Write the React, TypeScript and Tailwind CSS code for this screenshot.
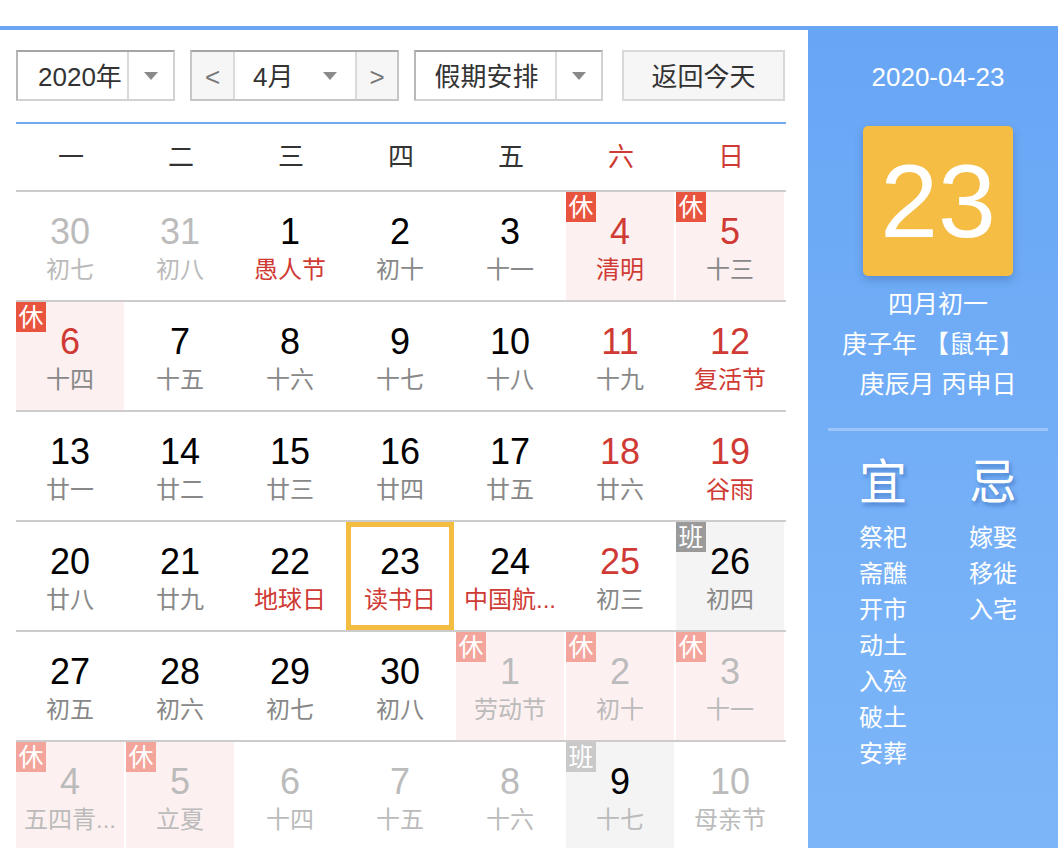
import React from "react";

type Cell = {
  n: number;
  l: string;
  other?: boolean;
  numRed?: boolean;
  lunarRed?: boolean;
  badge?: "休" | "班";
  today?: boolean;
  numBlack?: boolean;
};

const rows: Cell[][] = [
  [
    { n: 30, l: "初七", other: true },
    { n: 31, l: "初八", other: true },
    { n: 1, l: "愚人节", lunarRed: true },
    { n: 2, l: "初十" },
    { n: 3, l: "十一" },
    { n: 4, l: "清明", numRed: true, lunarRed: true, badge: "休" },
    { n: 5, l: "十三", numRed: true, badge: "休" },
  ],
  [
    { n: 6, l: "十四", numRed: true, badge: "休" },
    { n: 7, l: "十五" },
    { n: 8, l: "十六" },
    { n: 9, l: "十七" },
    { n: 10, l: "十八" },
    { n: 11, l: "十九", numRed: true },
    { n: 12, l: "复活节", numRed: true, lunarRed: true },
  ],
  [
    { n: 13, l: "廿一" },
    { n: 14, l: "廿二" },
    { n: 15, l: "廿三" },
    { n: 16, l: "廿四" },
    { n: 17, l: "廿五" },
    { n: 18, l: "廿六", numRed: true },
    { n: 19, l: "谷雨", numRed: true, lunarRed: true },
  ],
  [
    { n: 20, l: "廿八" },
    { n: 21, l: "廿九" },
    { n: 22, l: "地球日", lunarRed: true },
    { n: 23, l: "读书日", lunarRed: true, today: true },
    { n: 24, l: "中国航...", lunarRed: true },
    { n: 25, l: "初三", numRed: true },
    { n: 26, l: "初四", badge: "班" },
  ],
  [
    { n: 27, l: "初五" },
    { n: 28, l: "初六" },
    { n: 29, l: "初七" },
    { n: 30, l: "初八" },
    { n: 1, l: "劳动节", other: true, badge: "休" },
    { n: 2, l: "初十", other: true, badge: "休" },
    { n: 3, l: "十一", other: true, badge: "休" },
  ],
  [
    { n: 4, l: "五四青...", other: true, badge: "休" },
    { n: 5, l: "立夏", other: true, badge: "休" },
    { n: 6, l: "十四", other: true },
    { n: 7, l: "十五", other: true },
    { n: 8, l: "十六", other: true },
    { n: 9, l: "十七", other: true, badge: "班", numBlack: true },
    { n: 10, l: "母亲节", other: true },
  ],
];

const weekdays = ["一", "二", "三", "四", "五", "六", "日"];

function Arrow() {
  return (
    <div className="w-0 h-0 border-l-[7px] border-r-[7px] border-t-[8px] border-l-transparent border-r-transparent border-t-[#8a8a8a]" />
  );
}

function DayCell({ c }: { c: Cell }) {
  const bg =
    c.badge === "休"
      ? "bg-[#fdf0f0]"
      : c.badge === "班"
      ? "bg-[#f4f4f4]"
      : "bg-white";
  const numColor = c.numBlack
    ? "text-black"
    : c.other
    ? "text-[#bbbbbb]"
    : c.numRed
    ? "text-[#cf3a34]"
    : "text-black";
  const lunarColor = c.other
    ? "text-[#bbbbbb]"
    : c.lunarRed
    ? "text-[#cf3a34]"
    : "text-[#888888]";
  let badgeColor = "";
  if (c.badge === "休") badgeColor = c.other ? "bg-[#f4a59b]" : "bg-[#e9543f]";
  if (c.badge === "班") badgeColor = c.other ? "bg-[#c9c9c9]" : "bg-[#9a9a9a]";
  return (
    <div className="w-[110px] h-[108px] pr-[2px]">
      <div
        className={
          "relative w-[108px] h-[108px] box-border flex flex-col items-center " +
          bg +
          (c.today ? " border-[5px] border-[#f5bc42] pt-[15px]" : " pt-[20px]")
        }
      >
        {c.badge && (
          <div
            className={
              "absolute left-0 top-0 w-[30px] h-[30px] flex items-center justify-center text-white text-[25px] leading-[30px] " +
              badgeColor
            }
          >
            {c.badge}
          </div>
        )}
        <div className={"text-[36px] leading-[40px] " + numColor}>{c.n}</div>
        <div className={"text-[24px] leading-[36px] whitespace-nowrap " + lunarColor}>
          {c.l}
        </div>
      </div>
    </div>
  );
}

export default function App() {
  return (
    <div
      className="w-[1058px] h-[848px] overflow-hidden bg-white pt-[26px]"
      style={{ fontFamily: '"Liberation Sans", "Noto Sans CJK SC", sans-serif' }}
    >
      <div className="flex h-[822px] border-t-4 border-[#69a7f5]">
        {/* Left */}
        <div className="w-[808px] shrink-0 pl-4 pr-[22px] pt-[20px] bg-white">
          {/* Controls */}
          <div className="flex h-[51px] text-[26px] text-[#333333]">
            <div className="flex w-[159px] h-[51px] box-border border-2 border-[#d2d2d2] border-t-[#a6a6a6] border-l-[#b8b8b8] bg-white">
              <div className="w-[109px] flex items-center pl-[20px] pt-[3px]">2020年</div>
              <div className="flex-1 flex items-center justify-center border-l-2 border-[#dadada]">
                <Arrow />
              </div>
            </div>
            <div className="ml-[15px] flex w-[209px] h-[51px] box-border border-2 border-[#c6c6c6] border-t-[#a6a6a6]">
              <div className="w-[43px] flex items-center justify-center bg-[#f6f6f6] text-[#777777] border-r-2 border-[#dadada] pt-[3px]">
                &lt;
              </div>
              <div className="w-[120px] flex items-center bg-white pl-[18px]">
                <span className="pt-[3px]">4月</span>
                <div className="ml-[30px]">
                  <Arrow />
                </div>
              </div>
              <div className="flex-1 flex items-center justify-center bg-[#f6f6f6] text-[#777777] border-l-2 border-[#dadada] pt-[3px]">
                &gt;
              </div>
            </div>
            <div className="ml-[15px] flex w-[189px] h-[51px] box-border border-2 border-[#d2d2d2] border-t-[#a6a6a6] border-l-[#b8b8b8] bg-white">
              <div className="w-[139px] flex items-center justify-center pl-[2px] pt-[3px]">假期安排</div>
              <div className="flex-1 flex items-center justify-center border-l-2 border-[#dadada]">
                <Arrow />
              </div>
            </div>
            <div className="ml-[19px] w-[163px] h-[51px] box-border border-2 border-[#d8d8d8] bg-[#f6f6f6] flex items-center justify-center pt-[3px]">
              返回今天
            </div>
          </div>

          {/* Calendar */}
          <div className="mt-[21px] w-[770px] border-t-2 border-[#6fa9f2]">
            <div className="flex h-[66px]">
              {weekdays.map((w, i) => (
                <div
                  key={w}
                  className={
                    "w-[110px] flex items-center justify-center text-[26px] " +
                    (i >= 5 ? "text-[#cf3a34]" : "text-[#333333]")
                  }
                >
                  {w}
                </div>
              ))}
            </div>
            {rows.map((r, ri) => (
              <div key={ri} className="flex border-t-2 border-[#cccccc]">
                {r.map((c, ci) => (
                  <DayCell key={ci} c={c} />
                ))}
              </div>
            ))}
          </div>
        </div>

        {/* Right */}
        <div className="flex-1 bg-linear-to-b from-[#68a6f5] to-[#7db6f8] pl-[10px] text-white flex flex-col items-center">
          <div className="mt-[29px] text-[26px] leading-[36px]">2020-04-23</div>
          <div className="mt-[31px] w-[150px] h-[150px] rounded-[5px] bg-[#f5bd43] shadow-[0_4px_8px_rgba(40,70,140,0.3)] flex items-center justify-center text-[104px] leading-none">
            23
          </div>
          <div className="mt-[8px] text-[25px] leading-[40px] text-center">
            <div>四月初一</div>
            <div className="-ml-[10px]">庚子年 【鼠年】</div>
            <div>庚辰月 丙申日</div>
          </div>
          <div className="mt-[24px] w-[220px] h-[3px] bg-white/30" />
          <div className="mt-[24px] w-[220px] flex">
            <div className="w-[110px] flex flex-col items-center">
              <div className="text-[48px] leading-[56px] [text-shadow:2px_3px_4px_rgba(0,40,120,0.35)]">宜</div>
              <div className="mt-[9px] text-[24px] leading-[36px] flex flex-col items-center">
                <div>祭祀</div>
                <div>斋醮</div>
                <div>开市</div>
                <div>动土</div>
                <div>入殓</div>
                <div>破土</div>
                <div>安葬</div>
              </div>
            </div>
            <div className="w-[110px] flex flex-col items-center">
              <div className="text-[48px] leading-[56px] [text-shadow:2px_3px_4px_rgba(0,40,120,0.35)]">忌</div>
              <div className="mt-[9px] text-[24px] leading-[36px] flex flex-col items-center">
                <div>嫁娶</div>
                <div>移徙</div>
                <div>入宅</div>
              </div>
            </div>
          </div>
        </div>
      </div>
    </div>
  );
}
